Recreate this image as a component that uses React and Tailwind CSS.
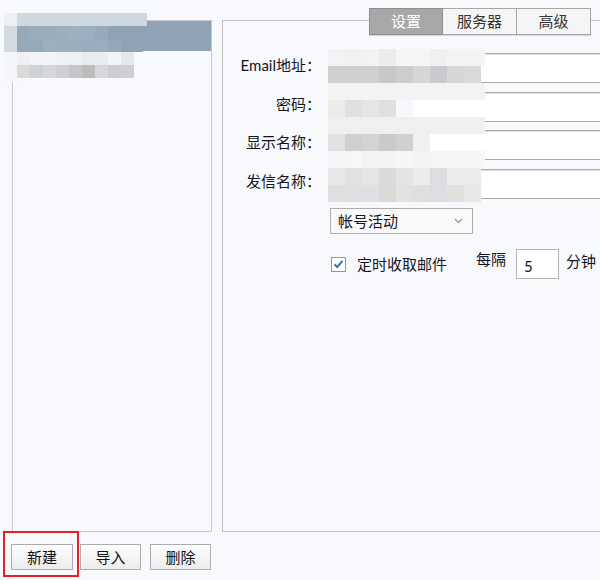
const leftMosaic = [
  [[13, "#eeeff2"], [130, "#cfd7df"]],
  [[13, "#d3dae1"], [13, "#97aabb"], [13, "#9aadbd"], [13, "#9aacbc"], [13, "#9cafbf"], [13, "#9eb1bf"], [13, "#9ab0c0"], [13, "#96aabb"], [13, "#8fa3b6"], [13, "#8fa3b5"], [9, "#8fa3b5"]],
  [[13, "#d3dae1"], [13, "#96aabb"], [13, "#94a9ba"], [13, "#9bafbf"], [13, "#9aaebe"], [13, "#9aaebe"], [13, "#98acbd"], [13, "#9aadbd"], [13, "#93a7b8"], [13, "#8fa3b5"], [9, "#8fa3b5"]],
  [[13, "#f5f6f9"], [13, "#f0f0f3"], [13, "#f3f4f7"], [13, "#f3f4f6"], [13, "#f0f1f4"], [13, "#eef0f3"], [13, "#eaebee"], [13, "#ebecef"], [13, "#f3f4f7"], [13, "#e8e8eb"]],
  [[13, "#f5f6f9"], [13, "#dcd9db"], [13, "#cdd2d5"], [13, "#d8d6d7"], [13, "#cdd1d3"], [13, "#c6c6c9"], [13, "#bdbdbd"], [13, "#d6d7d9"], [13, "#cecdd1"], [13, "#d0d0d3"]],
];

const rightMosaic = [
  ["#f3f3f3", "#f2f2f2", "#f2f3f2", "#ececec", "#f5f5f5", "#f5f5f5", "#f0f0f0", "#f4f4f4", "#f4f4f4", "#f4f4f4"],
  ["#d0d0d0", "#cfcfcf", "#cfd0d2", "#c9c8c8", "#cdcdcd", "#d5d6d6", "#c9cacd", "#d6d6d5", "#d9dada"],
  ["#f3f3f4", "#f3f3f4", "#f3f3f4", "#f3f3f4", "#f3f3f4", "#f3f3f4", "#f3f3f4", "#f3f3f4", "#f3f3f4", "#f3f3f4"],
  ["#ebebe9", "#e0e0e0", "#e5e5e5", "#e0e0e0", "#f7f8fb"],
  ["#efeff0", "#efeff0", "#efeff0", "#efeff0", "#efeff0", "#efeff0", "#efeff0", "#efeff0", "#efeff0", "#efeff0"],
  ["#e2e2e2", "#d0d0d0", "#d3d3d2", "#c9cbcb", "#d0d0d1", "#eff0ef"],
  ["#f4f5f6", "#f6f7f8", "#f3f4f5", "#f3f4f6", "#f5f6f8", "#f3f4f6", "#f5f6f8", "#f5f6f8", "#f5f6f8", "#f5f6f8"],
  ["#e6e7e7", "#e2e2e1", "#e4e5e5", "#dadada", "#e4e4e4", "#ececec", "#dcdddf", "#ebebeb", "#ebebeb"],
  ["#e0e0e0", "#dedfe0", "#dfe0e2", "#dadad8", "#e2e2e2", "#dfdfe0", "#dcdde0", "#e0e0df", "#e8e8e9"],
];

const fields = [
  { label: "Email地址", mt: "mt-[32px]" },
  { label: "密码", mt: "mt-[9px]" },
  { label: "显示名称", mt: "mt-[8px]" },
  { label: "发信名称", mt: "mt-[9px]" },
];

const Tab = ({ children, active }) => (
  <div
    className={
      active
        ? "w-[74px] h-[27px] flex items-center justify-center bg-[#a8a8a8] border border-[#8e8e8e] text-white"
        : "w-[74px] h-[27px] flex items-center justify-center bg-[#f5f5f5] border border-[#a6a6a6] border-l-0 text-[#333]"
    }
  >
    {children}
  </div>
);

const Button = ({ children, w }) => (
  <button className={`${w} h-[26px] bg-gradient-to-b from-[#fdfdfd] to-[#ececec] border border-[#adadad] text-[15px] text-[#111]`}>
    {children}
  </button>
);

const App = () => {
  return (
    <div className="relative w-[600px] h-[580px] overflow-hidden bg-[#f7f9fc] font-['Lato','Noto_Sans_CJK_SC',sans-serif] text-[15px] text-[#14141e]">
      <div className="flex pt-[20px]">
        {/* account list */}
        <div className="shrink-0 ml-[12px] w-[200px] h-[512px] border border-[#c8c8c8]">
          <div className="h-[30px] bg-[#8fa3b4]"></div>
        </div>

        {/* settings panel */}
        <div className="relative shrink-0 ml-[10px] w-[400px] h-[512px] border border-[#c4c4c4]">
          <div className="absolute left-[146px] -top-[13px] flex shadow-[0_1px_0_#d8d8d8]">
            <Tab active>设置</Tab>
            <Tab>服务器</Tab>
            <Tab>高级</Tab>
          </div>

          {fields.map((f) => (
            <div key={f.label} className={`flex ${f.mt}`}>
              <div className="shrink-0 w-[92px] h-[30px] flex items-center justify-end pb-[6px] leading-none whitespace-nowrap">
                {f.label}
                <span className="-mr-[6px]">：</span>
              </div>
              <div className="shrink-0 ml-[13px] w-[300px] h-[30px] bg-white border-t border-b border-[#a9a9a9] shadow-[inset_0_1px_0_#e2e2e2]"></div>
            </div>
          ))}

          <div className="ml-[107px] mt-[9px] w-[143px] h-[26px] flex items-center justify-between px-[7px] bg-[#f9f9f9] border border-[#adadad]">
            <span className="leading-none">帐号活动</span>
            <svg width="9" height="6" viewBox="0 0 9 6" className="mr-[2px]">
              <path d="M1 1l3.5 3.5L8 1" fill="none" stroke="#9a9a9a" strokeWidth="1.3" />
            </svg>
          </div>

          <div className="flex items-center ml-[108px] mt-[15px] h-[30px]">
            <div className="shrink-0 w-[15px] h-[15px] flex items-center justify-center bg-white border border-[#7f98b4]">
              <svg width="11" height="10" viewBox="0 0 11 10">
                <path d="M1.5 5.2l2.8 2.8L9.5 1.8" fill="none" stroke="#3a74b8" strokeWidth="2" />
              </svg>
            </div>
            <span className="ml-[11px] leading-none whitespace-nowrap">定时收取邮件</span>
            <span className="ml-[29px] mb-[10px] leading-none whitespace-nowrap">每隔</span>
            <div className="shrink-0 ml-[10px] w-[43px] h-[30px] flex items-center pl-[7px] bg-white border border-[#b4b4b4]">
              <span className="mt-[4px] leading-none">5</span>
            </div>
            <span className="ml-[7px] mb-[6px] leading-none whitespace-nowrap">分钟</span>
          </div>
        </div>
      </div>

      {/* buttons */}
      <div className="relative flex mt-[12px] ml-[11px]">
        <Button w="w-[62px]">新建</Button>
        <div className="ml-[7px]">
          <Button w="w-[61px]">导入</Button>
        </div>
        <div className="ml-[9px]">
          <Button w="w-[61px]">删除</Button>
        </div>
        <div className="absolute -left-[8px] -top-[13px] w-[76px] h-[46px] border-2 border-[#e5202b]"></div>
      </div>

      {/* pixelated blur over list entry */}
      <div className="absolute left-[4px] top-[13px] flex flex-col">
        {leftMosaic.map((row, i) => (
          <div key={i} className="flex h-[13px]">
            {row.map(([w, c], j) => (
              <div key={j} style={{ width: w, backgroundColor: c }}></div>
            ))}
          </div>
        ))}
        <div className="w-[13px] h-[4px] bg-[#f5f6f9]"></div>
      </div>

      {/* pixelated blur over field values */}
      <div className="absolute left-[328px] top-[49px] flex flex-col">
        {rightMosaic.map((row, i) => (
          <div key={i} className="flex h-[17px]">
            {row.map((c, j) => (
              <div key={j} style={{ width: j === 9 ? 4 : 17, backgroundColor: c }}></div>
            ))}
          </div>
        ))}
      </div>
    </div>
  );
};

export default App;
